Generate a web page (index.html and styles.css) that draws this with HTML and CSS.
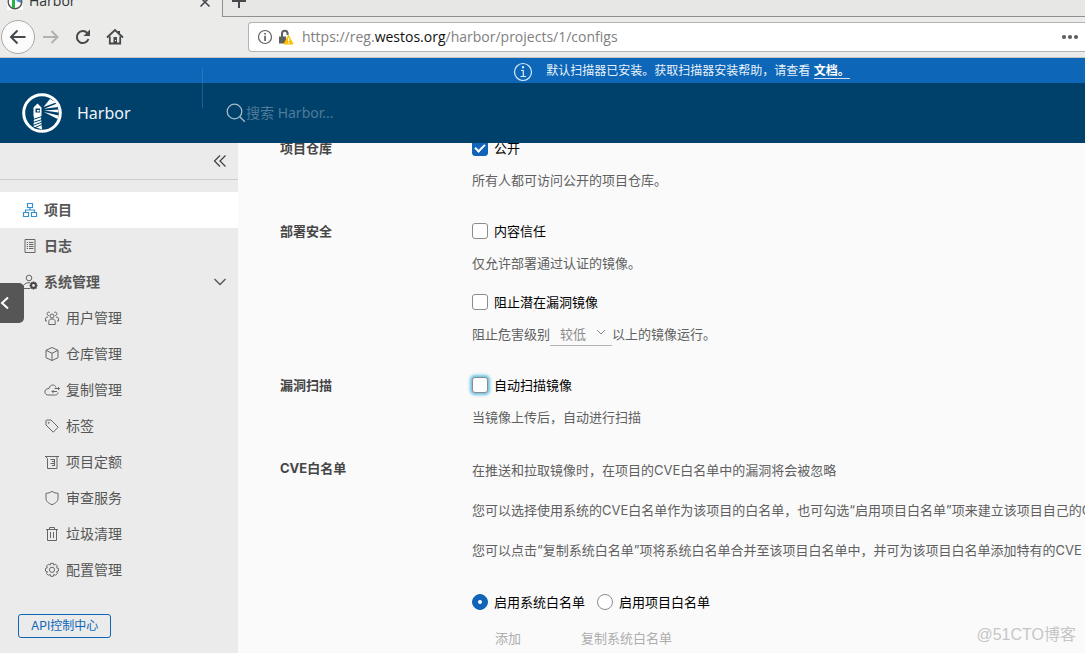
FILE: index.html
```html
<!DOCTYPE html>
<html lang="zh-CN">
<head>
<meta charset="utf-8">
<title>Harbor</title>
<link rel="stylesheet" href="styles.css">
</head>
<body>
<div class="tabstrip">
  <div class="tab">
    <svg class="favicon" width="16" height="16" viewBox="0 0 16 16"><rect width="16" height="16" fill="#fff"/><circle cx="8" cy="8" r="6.8" fill="#fff" stroke="#555" stroke-width="1.4"/><path d="M5 5h3v9H5z" fill="#27b34a"/><path d="M9 7l5-4v6z" fill="#4f8ed6"/></svg>
    <span class="tab-title">Harbor</span>
    <button class="plain tab-close" aria-label="关闭标签页"><svg width="12" height="12" viewBox="0 0 12 12"><path d="M1.5 1.5l9 9M10.5 1.5l-9 9" stroke="#45494b" stroke-width="1.6"/></svg></button>
  </div>
  <button class="plain tab-new" aria-label="新建标签页"><svg width="14" height="14" viewBox="0 0 14 14"><path d="M7 0v14M0 7h14" stroke="#45494b" stroke-width="2"/></svg></button>
</div>
<div class="toolbar">
  <div class="nav-buttons">
    <button class="plain back" aria-label="后退"><svg width="18" height="18" viewBox="0 0 18 18"><path d="M16.500 9H2.500M8.500 2.500L2 9l6.500 6.500" fill="none" stroke="#45494b" stroke-width="2"/></svg></button>
    <button class="plain nav" aria-label="前进"><svg width="18" height="18" viewBox="0 0 18 18"><path d="M1 9h14M9.500 3l6 6-6 6" fill="none" stroke="#b0b2b2" stroke-width="2"/></svg></button>
    <button class="plain nav" aria-label="刷新"><svg width="18" height="18" viewBox="0 0 18 18"><path d="M13.300 5A6 6 0 1 0 14.500 11" fill="none" stroke="#45494b" stroke-width="2"/><path d="M16 1.500V8H9.500z" fill="#45494b"/></svg></button>
    <button class="plain nav" aria-label="主页"><svg width="18" height="18" viewBox="0 0 18 18"><path d="M1 9.500l8-7.500 8 7.500M3.800 8.500v7h10.400v-7" fill="none" stroke="#45494b" stroke-width="1.800"/><path d="M12 3h2v4l-2-2zM7.500 9h3.500v7H7.500z" fill="#45494b"/><path d="M9 12h1v1H9z" fill="#fff"/></svg></button>
  </div>
  <div class="urlbar">
    <svg width="16" height="16" viewBox="0 0 16 16"><circle cx="8" cy="8" r="6.500" fill="none" stroke="#5f5f5f" stroke-width="1.200"/><path d="M7.200 4h1.700v1.600H7.200zM7.200 6.800h1.700V12H7.200z" fill="#5f5f5f"/></svg>
    <svg width="16" height="16" viewBox="0 0 16 16"><path d="M4 8V4.500a2.800 2.800 0 0 1 5.600 0V6" fill="none" stroke="#5f5f5f" stroke-width="2"/><path d="M1 7.500h7v7H1z" fill="#5f5f5f"/><path d="M10.500 6.500L15 15H6z" fill="#ffbf00" stroke="#ffbf00" stroke-linejoin="round"/><path d="M10 9h1.300v3.200H10zM10 13h1.300v1.300H10z" fill="#fff"/></svg>
    <span class="url">https://reg.<b>westos.org</b>/harbor/projects/1/configs</span>
    <button class="plain more" aria-label="页面操作"><svg width="18" height="6" viewBox="0 0 18 6"><g fill="#5f5f5f"><circle cx="3" cy="3" r="2.100"/><circle cx="9" cy="3" r="2.100"/><circle cx="15" cy="3" r="2.100"/></g></svg></button>
  </div>
</div>
<div class="banner">
  <svg width="20" height="20" viewBox="0 0 20 20" fill="none" stroke="#d9edfa" stroke-width="1.200"><circle cx="10" cy="10" r="8.500"/><path d="M8 8.500h2.300v6M7.500 14.500h5.500"/><circle cx="10" cy="5.300" r=".6" fill="#d9edfa"/></svg>
  <p>默认扫描器已安装。获取扫描器安装帮助，请查看 <a href="#docs">文档。</a></p>
</div>
<header class="header">
  <a class="brand" href="#home">
    <svg width="40" height="40" viewBox="0 0 40 40">
      <circle cx="20" cy="20" r="18.300" fill="none" stroke="#fff" stroke-width="3"/>
      <path d="M11.500 14.500l4-4 4 4v9h-.5l1 13-8.500-3 .5-10h-.5z" fill="#fff"/>
      <path d="M13.500 15.500h4.500v4h-4.500z" fill="#00416b"/><path d="M15 17h2.500v1.500H15z" fill="#fff"/>
      <path d="M11 26.500l9-3M11 29.500l9-3M11 32.500l9-3.500M12 35l8-3.500" stroke="#00416b" stroke-width="1"/>
      <path d="M21.500 14L28 6l6 3.500zM22 15.800l12.500-5 1.500 3.200zM22 17.500l14.500-1v3zM22 19l14.500 3.500-1 3.500z" fill="#fff"/>
    </svg>
    <span>Harbor</span>
  </a>
  <form class="search">
    <svg width="20" height="20" viewBox="0 0 20 20" fill="none" stroke="#a5bccb" stroke-width="1.300"><circle cx="8.500" cy="8.500" r="7.300"/><path d="M13.800 13.800l5 5"/></svg>
    <input type="text" placeholder="搜索 Harbor..." aria-label="搜索 Harbor">
  </form>
</header>
<div class="body">
  <nav class="sidebar">
    <div class="collapse"><button class="plain" aria-label="收起侧栏"><svg width="14" height="14" viewBox="0 0 14 14" fill="none" stroke="#444" stroke-width="1.300"><path d="M7 1.500L1.500 7 7 12.500M12.500 1.500L7 7l5.500 5.500"/></svg></button></div>
    <ul class="menu">
      <li><a class="item active" href="#projects"><svg width="16" height="16" viewBox="0 0 16 16" fill="none" stroke="#3590cf" stroke-width="1.200"><path d="M5.500 1.500h5v4h-5zM1.500 10.500h5v4h-5zM9.500 10.500h5v4h-5zM8 5.500V8M3.500 10V8h9v2"/></svg>项目</a></li>
      <li><a class="item" href="#logs"><svg width="16" height="16" viewBox="0 0 16 16" fill="none" stroke="#666"><path d="M3 1.500h10v13H3zM4.800 4.500h1.200M7 4.500h4.500M4.800 6.500h1.200M7 6.500h4.500M4.800 8.500h1.200M7 8.500h4.500M4.800 10.500h1.200M7 10.500h4.500"/></svg>日志</a></li>
      <li><a class="item" href="#admin"><svg width="16" height="16" viewBox="0 0 16 16" fill="none" stroke="#666"><circle cx="7" cy="4" r="2.800"/><path d="M8 14.500H1.500v-3c1-2 3.500-3 6.500-2.800"/><circle cx="11.500" cy="11.500" r="2.400" stroke="#444" stroke-width="2"/><path d="M11.500 7.500v1M11.500 14.500v1M7.500 11.500h1M14.500 11.500h1M8.800 8.800l1 1M13.500 13.500l1 1M14.300 8.800l-1 1M9.700 13.500l-1 1" stroke="#444" stroke-width="1.500"/></svg>系统管理<svg class="caret" width="14" height="14" viewBox="0 0 14 14" fill="none" stroke="#555" stroke-width="1.400"><path d="M1.500 4L7 9.500 12.500 4"/></svg></a>
        <ul class="submenu">
          <li><a class="item" href="#users"><svg width="16" height="16" viewBox="0 0 16 16" fill="none" stroke="#666"><circle cx="8" cy="6" r="2"/><path d="M4.800 14.500v-3c0-1.500 1-2.500 3.200-2.500s3.200 1 3.200 2.500v3zM3 11H1.500V9c0-1.500 1-2 2.500-2M13 11h1.500V9c0-1.500-1-2-2.500-2"/><path d="M5 5.500a1.700 1.700 0 1 1 .8-3M11 5.500a1.700 1.700 0 1 0-.8-3"/></svg>用户管理</a></li>
          <li><a class="item" href="#registries"><svg width="16" height="16" viewBox="0 0 16 16" fill="none" stroke="#666"><path d="M8 1.500l6 2.800v7.400l-6 2.800-6-2.800V4.300zM2 4.300l6 3 6-3M8 7.300v7.200"/></svg>仓库管理</a></li>
          <li><a class="item" href="#replication"><svg width="16" height="16" viewBox="0 0 16 16" fill="none" stroke="#666"><path d="M12 5.500C11 2 6 2 5 6.500c-3 0-4.500 2-4 4 .3 1.500 1.500 2.500 3 2.500h7.500c1.500 0 2.500-1 2.500-2.500M10.500 6.500h5M14 5l1.500 1.500L14 8M13 9.500H8M9.500 8L8 9.500 9.500 11"/></svg>复制管理</a></li>
          <li><a class="item" href="#labels"><svg width="16" height="16" viewBox="0 0 16 16" fill="none" stroke="#666"><path d="M2 2.500V7l7.200 7.200 5-5L7 2H2.500z"/><circle cx="4.800" cy="4.800" r=".5"/></svg>标签</a></li>
          <li><a class="item" href="#quotas"><svg width="16" height="16" viewBox="0 0 16 16" fill="none" stroke="#666"><path d="M1 2.500h14M1.500 2.500l2 2v10h9.500v-12M6.500 5.500h4M8 7.500h2.500M6.500 9.500h4M8 11.500h2.500M10.500 5v7"/></svg>项目定额</a></li>
          <li><a class="item" href="#scanners"><svg width="16" height="16" viewBox="0 0 16 16" fill="none" stroke="#666"><path d="M8 1.300c2 1.500 4 2 6 2v5c0 3-2.500 5-6 6.400C4.500 13.300 2 11.300 2 8.300v-5c2 0 4-.5 6-2z"/></svg>审查服务</a></li>
          <li><a class="item" href="#gc"><svg width="16" height="16" viewBox="0 0 16 16" fill="none" stroke="#666"><path d="M2 3.500h12M5.500 3V1.500h5V3M3.500 3.500v11h9v-11M6.500 6v6M9.500 6v6"/></svg>垃圾清理</a></li>
          <li><a class="item" href="#config"><svg width="16" height="16" viewBox="0 0 16 16" fill="none" stroke="#666"><path d="M6.700 1.300h2.600l.5 1.800 1.700-.9 1.900 1.900-.9 1.700 1.900.6v2.700l-1.900.6.9 1.700-1.900 1.900-1.700-.9-.5 1.900H6.700l-.6-1.900-1.700.9-1.900-1.900.9-1.700-1.900-.6V6.400l1.900-.6-.9-1.700 1.900-1.900 1.700.9z" stroke-linejoin="round"/><circle cx="8" cy="7.800" r="2.600"/></svg>配置管理</a></li>
        </ul>
      </li>
    </ul>
    <button class="api">API控制中心</button>
  </nav>
  <main class="content">
    <section class="row">
      <h2>项目仓库</h2>
      <div class="field">
        <label class="check"><input type="checkbox" checked>公开</label>
        <p class="help">所有人都可访问公开的项目仓库。</p>
      </div>
    </section>
    <section class="row">
      <h2>部署安全</h2>
      <div class="field">
        <label class="check"><input type="checkbox">内容信任</label>
        <p class="help">仅允许部署通过认证的镜像。</p>
        <label class="check next"><input type="checkbox">阻止潜在漏洞镜像</label>
        <div class="help severity">
          <label for="severity">阻止危害级别</label>
          <span class="select"><select id="severity" disabled><option>较低</option></select><svg width="10" height="10" viewBox="0 0 10 10" fill="none" stroke="#888"><path d="M1 3l4 4 4-4"/></svg></span>
          <span>以上的镜像运行。</span>
        </div>
      </div>
    </section>
    <section class="row">
      <h2>漏洞扫描</h2>
      <div class="field">
        <label class="check"><input class="focused" type="checkbox">自动扫描镜像</label>
        <p class="help">当镜像上传后，自动进行扫描</p>
      </div>
    </section>
    <section class="row">
      <h2>CVE白名单</h2>
      <div class="field cve">
        <div class="notes">
          <p>在推送和拉取镜像时，在项目的CVE白名单中的漏洞将会被忽略</p>
          <p>您可以选择使用系统的CVE白名单作为该项目的白名单，也可勾选“启用项目白名单”项来建立该项目自己的CVE</p>
          <p>您可以点击“复制系统白名单”项将系统白名单合并至该项目白名单中，并可为该项目白名单添加特有的CVE</p>
        </div>
        <div class="radios">
          <label class="check"><input type="radio" name="list" checked>启用系统白名单</label>
          <label class="check"><input type="radio" name="list">启用项目白名单</label>
        </div>
        <div class="actions">
          <button class="plain" disabled>添加</button>
          <button class="plain" disabled>复制系统白名单</button>
        </div>
      </div>
    </section>
  </main>
</div>
<button class="plain drawer" aria-label="展开"><svg width="10" height="14" viewBox="0 0 10 14" fill="none" stroke="#fff" stroke-width="2"><path d="M8 1.500L2 7l6 5.500"/></svg></button>
<div class="watermark">@51CTO博客</div>
</body>
</html>
```
FILE: styles.css
```css
* {
  box-sizing: border-box;
}

body {
  margin: 0;
  height: 100vh;
  display: flex;
  flex-direction: column;
  overflow: hidden;
  position: relative;
  background: #fafafa;
  color: #565656;
  font: 13px/24px Inter, "Noto Sans CJK SC", sans-serif;
}

h2, p, ul {
  margin: 0;
  padding: 0;
}

ul {
  list-style: none;
}

svg {
  flex: none;
  display: block;
}

a {
  color: inherit;
  text-decoration: none;
}

button, input, select {
  font: inherit;
}

.plain {
  border: 0;
  padding: 0;
  background: none;
  display: flex;
  align-items: center;
  justify-content: center;
}

/* Browser chrome */
.tabstrip {
  flex: none;
  height: 17px;
  display: flex;
  overflow: hidden;
  background: #e7e7e5;
  font: 14px/20px "Open Sans", sans-serif;
  color: #2e3436;
}

.tab {
  width: 223px;
  display: flex;
  align-items: flex-end;
  padding: 0 11px 7px 7px;
  background: #ebebe9;
  border-right: 1px solid #8f8f8f;
}

.tab-title {
  flex: 1;
  margin-left: 6px;
  line-height: 18px;
}

.tab-close {
  margin-bottom: 2px;
}

.tab-new {
  flex: 1;
  justify-content: flex-start;
  align-items: flex-end;
  padding: 0 0 8px 9px;
  border-bottom: 1px solid #8f8f8f;
}

.toolbar {
  flex: none;
  height: 41px;
  display: flex;
  align-items: center;
  background: #ebebe9;
  border-bottom: 1px solid #c4c4c2;
  overflow: hidden;
}

.nav-buttons {
  flex: none;
  width: 248px;
  display: flex;
  align-items: center;
  padding-left: 1px;
}

.back {
  width: 34px;
  height: 34px;
  border: 1px solid #a9a9a9;
  border-radius: 50%;
  background: #fbfbfb;
}

.nav {
  width: 32px;
  height: 32px;
}

.urlbar {
  flex: 1;
  height: 30px;
  display: flex;
  align-items: center;
  gap: 5px;
  padding: 0 6px 0 8px;
  background: #fff;
  border: 1px solid #b3b3b3;
  border-right: 0;
  border-radius: 4px 0 0 4px;
  font: 14px/20px "Open Sans", sans-serif;
  color: #808080;
}

.url {
  flex: 1;
  margin-left: 3px;
}

.url b {
  color: #111;
  font-weight: 400;
}

/* Application header */
.banner {
  flex: none;
  height: 25px;
  display: flex;
  align-items: center;
  justify-content: center;
  gap: 13px;
  padding-left: 278px;
  background: #0d66b7;
  color: #e8f2fa;
  font-size: 12px;
}

.banner svg {
  margin-top: 2px;
}

.banner p {
  white-space: pre;
}

.banner a {
  display: inline-block;
  line-height: 15px;
  border-bottom: 1px solid #cfe0f0;
  color: #fff;
  font-weight: 700;
}

.header {
  flex: none;
  height: 60px;
  display: flex;
  align-items: center;
  background: #00416b;
  position: relative;
  font-family: "Noto Sans", "Noto Sans CJK SC", sans-serif;
}

.brand {
  flex: none;
  width: 226px;
  display: flex;
  align-items: center;
  gap: 15px;
  padding-left: 22px;
  color: #f0f4f7;
  font-size: 16px;
}

/* Divider that runs up across the banner */
.header::before {
  content: "";
  position: absolute;
  left: 202px;
  top: -15px;
  width: 1px;
  height: 40px;
  background: rgba(73, 175, 217, 0.3);
}

.search {
  flex: 1;
  display: flex;
  align-items: center;
}

.search input {
  flex: 1;
  border: 0;
  padding: 0;
  background: none;
  color: #fff;
  font-size: 14px;
  outline: 0;
}

.search input::placeholder {
  color: #4d7b99;
  opacity: 1;
}

.body {
  flex: 1;
  min-height: 0;
  display: flex;
}

/* Sidebar */
.sidebar {
  flex: none;
  width: 238px;
  background: #ebebeb;
  font-size: 14px;
}

.collapse {
  height: 37px;
  display: flex;
  align-items: center;
  justify-content: flex-end;
  padding-right: 11px;
  border-bottom: 1px solid #ccc;
}

.menu {
  padding-top: 12px;
}

.item {
  height: 36px;
  display: flex;
  align-items: center;
  gap: 6px;
  padding: 0 11px 0 22px;
  font-weight: 700;
}

.active {
  background: #fff;
}

.caret {
  margin-left: auto;
}

.submenu .item {
  padding-left: 44px;
  font-weight: 400;
}

.api {
  height: 24px;
  margin: 26px 0 0 18px;
  padding: 0 12px;
  border: 1px solid #0d66b7;
  border-radius: 3px;
  background: none;
  color: #0d66b7;
  font-size: 12px;
  line-height: 20px;
}

/* Settings form, scrolled so its first row sits under the header */
.content {
  flex: 1;
  min-width: 0;
  overflow: hidden;
  padding-left: 42px;
}

.row {
  display: grid;
  grid-template-columns: 192px 1fr;
  margin-bottom: 27px;
}

.row:first-child {
  margin-top: -7px;
}

.row h2 {
  font-size: 13px;
  line-height: 24px;
  font-weight: 700;
  color: #454545;
}

.field {
  white-space: nowrap;
}

.check {
  display: flex;
  align-items: center;
  gap: 6px;
  color: #000;
}

.next {
  margin-top: 15px;
}

.help {
  margin-top: 8px;
}

.help, .notes {
  color: #606060;
}

.check input {
  appearance: none;
  flex: none;
  width: 16px;
  height: 16px;
  margin: 0;
  border: 1px solid #8c8c8c;
  border-radius: 3px;
  background: #fff;
  display: grid;
  place-content: center;
}

.check input:checked {
  border-color: #1264b8;
  background: #1264b8;
}

.check input[type="checkbox"]:checked::before {
  content: "";
  width: 8px;
  height: 4px;
  margin-bottom: 2px;
  border: solid #fff;
  border-width: 0 0 2px 2px;
  transform: rotate(-45deg);
}

.check input[type="radio"] {
  border-radius: 50%;
}

.check input[type="radio"]:checked::before {
  content: "";
  width: 4px;
  height: 4px;
  border-radius: 50%;
  background: #fff;
}

.check .focused {
  box-shadow: 0 0 3px 2px #6bc1e3;
}

.severity {
  display: flex;
}

.select {
  width: 62px;
  position: relative;
}

.select select {
  appearance: none;
  width: 100%;
  height: 24px;
  padding: 0 10px;
  border: 0;
  border-bottom: 1px solid #b3b3b3;
  border-radius: 0;
  background: none;
  color: #8c8c8c;
  opacity: 1;
}

.select svg {
  position: absolute;
  right: 6px;
  top: 5px;
}

.cve {
  display: flex;
  flex-direction: column;
  gap: 12px;
  padding-top: 2px;
}

.notes {
  display: grid;
  gap: 16px;
  margin-bottom: 16px;
}

.radios {
  display: flex;
  gap: 12px;
}

.actions {
  display: flex;
  gap: 60px;
  padding-left: 23px;
}

.actions button {
  color: #adadad;
}

/* Floating pieces */
.drawer {
  position: absolute;
  left: 0;
  top: 283px;
  width: 24px;
  height: 40px;
  justify-content: flex-start;
  border-radius: 0 5px 5px 0;
  background: #565656;
}

.watermark {
  position: absolute;
  right: 9px;
  bottom: 6px;
  color: #c6c6c6;
  font-family: "Liberation Sans", "Noto Sans CJK SC", sans-serif;
  font-size: 16px;
}
```
